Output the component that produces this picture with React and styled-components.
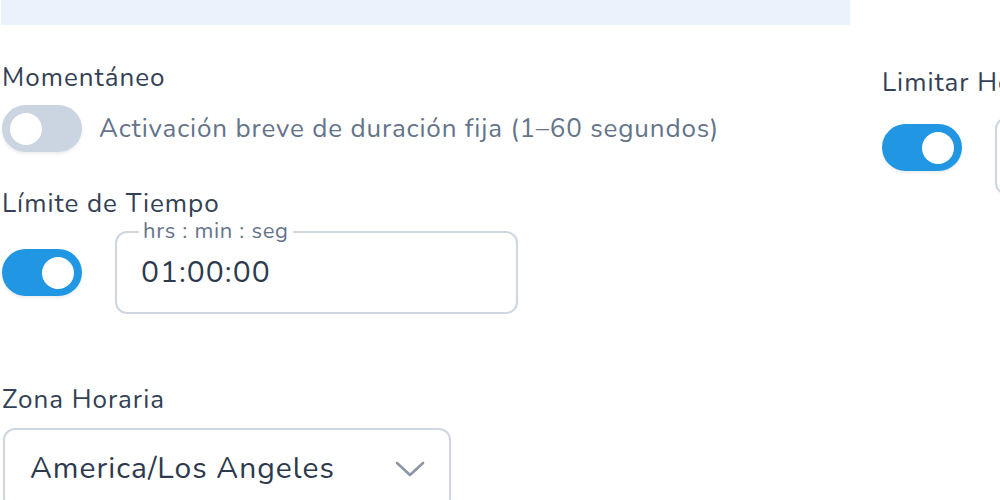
import React, { useState } from "react";
import styled, { createGlobalStyle } from "styled-components";

const GlobalStyle = createGlobalStyle`
  html, body {
    margin: 0;
    padding: 0;
    background: #ffffff;
    overflow: hidden;
  }
  body {
    font-family: "Nunito", "Open Sans", "Lato", sans-serif;
    color: #334155;
  }
`;

const App = () => {
  const [momentary, setMomentary] = useState(false);
  const [timeLimit, setTimeLimit] = useState(true);
  const [limitHours, setLimitHours] = useState(true);

  return (
    <>
      <GlobalStyle />
      <Page>
        <LeftColumn>
          <Banner />
          <Label $top={37}>Momentáneo</Label>
          <Row $top={11} $gap={17}>
            <Toggle on={momentary} onClick={() => setMomentary(!momentary)} />
            <Hint>Activación breve de duración fija (1–60 segundos)</Hint>
          </Row>
          <Label $top={36}>Límite de Tiempo</Label>
          <Row $top={11} $gap={33}>
            <Toggle on={timeLimit} onClick={() => setTimeLimit(!timeLimit)} />
            <Fieldset $width={403}>
              <Legend>hrs : min : seg</Legend>
              <Value>01:00:00</Value>
            </Fieldset>
          </Row>
          <Label $top={70}>Zona Horaria</Label>
          <Select>
            <Value>America/Los Angeles</Value>
            <svg width="30" height="18" viewBox="0 0 30 18">
              <path
                d="M2 3 L15 15 L28 3"
                fill="none"
                stroke="#8c96a8"
                strokeWidth="2.6"
                strokeLinecap="round"
                strokeLinejoin="round"
              />
            </svg>
          </Select>
        </LeftColumn>
        <RightColumn>
          <Label $top={67}>Limitar Horario</Label>
          <Row $top={18} $gap={33} $align="flex-start">
            <Toggle
              on={limitHours}
              offset={7}
              onClick={() => setLimitHours(!limitHours)}
            />
            <Fieldset $width={300} $height={78}>
              <Value />
            </Fieldset>
          </Row>
        </RightColumn>
      </Page>
    </>
  );
};

const Toggle = ({ on, offset = 0, onClick }) => (
  <Track $on={on} $offset={offset} onClick={onClick}>
    <Knob $on={on} />
  </Track>
);

export default App;

const Page = styled.div`
  display: flex;
  gap: 32px;
  width: 1000px;
  height: 500px;
  padding-left: 2px;
  box-sizing: border-box;
`;

const LeftColumn = styled.div`
  display: flex;
  flex-direction: column;
  width: 848px;
  flex-shrink: 0;

  & > * {
    flex-shrink: 0;
  }
`;

const RightColumn = styled.div`
  display: flex;
  flex-direction: column;
  flex-shrink: 0;

  & > * {
    flex-shrink: 0;
  }
`;

const Banner = styled.div`
  height: 25px;
  margin-left: -1px;
  background: #eaf3fc;
`;

const Label = styled.div`
  margin-top: ${({ $top }) => $top}px;
  font-size: 26px;
  line-height: 32px;
  letter-spacing: 1px;
  color: #334155;
  white-space: nowrap;
`;

const Row = styled.div`
  display: flex;
  align-items: ${({ $align }) => $align || "center"};
  gap: ${({ $gap }) => $gap}px;
  margin-top: ${({ $top }) => $top}px;
`;

const Hint = styled.span`
  font-size: 26px;
  line-height: 32px;
  letter-spacing: 0.85px;
  color: #64748b;
  white-space: nowrap;
`;

const Track = styled.div`
  position: relative;
  flex-shrink: 0;
  width: 80px;
  height: 47px;
  margin-top: ${({ $offset }) => $offset}px;
  border-radius: 24px;
  background: ${({ $on }) => ($on ? "#2196e3" : "#cbd5e1")};
  box-shadow: 0 2px 3px rgba(15, 23, 42, 0.08);
  cursor: pointer;
`;

const Knob = styled.div`
  position: absolute;
  top: 7.5px;
  left: ${({ $on }) => ($on ? "40px" : "8px")};
  width: 32px;
  height: 32px;
  border-radius: 50%;
  background: #ffffff;
`;

const Fieldset = styled.div`
  position: relative;
  display: flex;
  align-items: center;
  box-sizing: border-box;
  width: ${({ $width }) => $width}px;
  height: ${({ $height }) => $height || 83}px;
  padding: 0 24px;
  border: 2px solid #cdd6e1;
  border-radius: 12px;
  flex-shrink: 0;
`;

const Legend = styled.span`
  position: absolute;
  top: -16px;
  left: 22px;
  padding: 0 4px;
  background: #ffffff;
  font-size: 22px;
  line-height: 28px;
  letter-spacing: 0.7px;
  color: #64748b;
`;

const Value = styled.span`
  font-size: 30px;
  line-height: 36px;
  letter-spacing: 1px;
  color: #2d3a4e;
  white-space: nowrap;
`;

const Select = styled.div`
  display: flex;
  align-items: center;
  justify-content: space-between;
  box-sizing: border-box;
  width: 448px;
  height: 82px;
  margin-top: 12px;
  margin-left: 1px;
  padding: 0 24px 0 25px;
  border: 2px solid #cdd6e1;
  border-radius: 12px;
`;
